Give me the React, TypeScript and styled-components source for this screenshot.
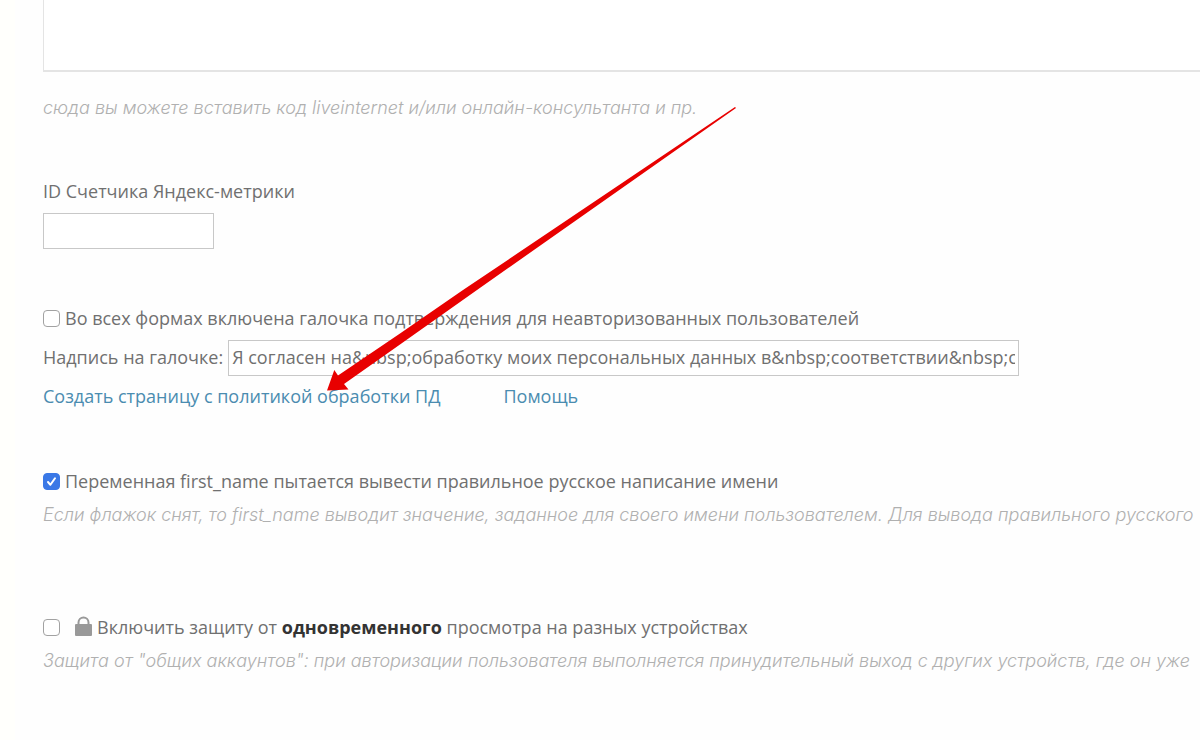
import React from "react";
import styled, { createGlobalStyle } from "styled-components";

const GlobalStyle = createGlobalStyle`
  *, *::before, *::after { box-sizing: border-box; }
  body {
    margin: 0;
    background: #fefefe;
    color: #707070;
    font-family: "Open Sans", "Noto Sans", sans-serif;
    font-size: 18px;
    line-height: 24px;
    overflow-x: hidden;
  }
`;

const Page = styled.main`
  position: relative;
  min-height: 100vh;
  padding-left: 28px;
  border-left: 15px solid #fffffc;
  overflow: hidden;
  white-space: nowrap;
`;

const Section = styled.section<{ $gap: number }>`
  display: flex;
  flex-direction: column;
  align-items: flex-start;
  margin-bottom: ${(p) => p.$gap}px;
`;

const CodeArea = styled.textarea`
  display: block;
  width: 100%;
  height: 72px;
  margin-bottom: 24px;
  border: solid #e4e4e4;
  border-width: 0 0 2px 1px;
  background: #fff;
  resize: none;
  outline: none;
`;

const Note = styled.p`
  margin: 0;
  color: #b0b0b0;
  font-family: Inter, "Open Sans", sans-serif;
  font-style: italic;
  font-weight: 300;
`;

const TextInput = styled.input<{ $width: number }>`
  width: ${(p) => p.$width}px;
  height: 36px;
  padding: 0 3px 2px;
  border: 1px solid #c8c8c8;
  border-radius: 0;
  background: #fff;
  color: inherit;
  font: inherit;
  outline: none;
`;

const FieldLabel = styled.label`
  margin-bottom: 10px;
`;

const Row = styled.div`
  display: flex;
  align-items: center;
  gap: 5px;
`;

const CheckRow = styled(Row)`
  margin-bottom: 10px;
`;

const LabelledRow = styled(Row)`
  margin-bottom: 8px;

  label {
    padding-bottom: 2px;
  }
`;

const LinkRow = styled(Row)`
  gap: 63px;
`;

const Checkbox = styled.input`
  appearance: none;
  flex: none;
  width: 17px;
  height: 17px;
  margin: 0;
  border: 1px solid #a2a2a2;
  border-radius: 4px;
  background: #fff;

  &:checked {
    border-color: #3a78e6;
    background: #3a78e6
      url("data:image/svg+xml,%3Csvg xmlns='http://www.w3.org/2000/svg' viewBox='0 0 15 15'%3E%3Cpath d='M4 8l2.4 2.8L11 4.2' fill='none' stroke='white' stroke-width='2' stroke-linecap='round' stroke-linejoin='round'/%3E%3C/svg%3E")
      center / 15px 15px no-repeat;
  }
`;

const CheckLabel = styled.label`
  b {
    color: #333;
    font-weight: 700;
  }
`;

const LockIcon = styled.svg`
  flex: none;
  width: 17px;
  height: 22px;
  margin-left: 10px;
`;

const Link = styled.a`
  color: #4a8cb0;
  text-decoration: none;
`;

const Arrow = styled.svg`
  position: absolute;
  top: 100px;
  left: 305px;
  width: 420px;
  height: 300px;
  pointer-events: none;
`;

export default function App() {
  return (
    <>
      <GlobalStyle />
      <Page>
        <Section $gap={59}>
          <CodeArea aria-label="Код счетчиков" />
          <Note>сюда вы можете вставить код liveinternet и/или онлайн-консультанта и пр.</Note>
        </Section>

        <Section $gap={57}>
          <FieldLabel htmlFor="metrika">ID Счетчика Яндекс-метрики</FieldLabel>
          <TextInput id="metrika" type="text" $width={171} />
        </Section>

        <Section $gap={61}>
          <CheckRow>
            <Checkbox id="confirm" type="checkbox" />
            <CheckLabel htmlFor="confirm">
              Во всех формах включена галочка подтверждения для неавторизованных пользователей
            </CheckLabel>
          </CheckRow>
          <LabelledRow>
            <label htmlFor="caption">Надпись на галочке:</label>
            <TextInput
              id="caption"
              type="text"
              $width={791}
              defaultValue="Я согласен на&amp;nbsp;обработку моих персональных данных в&amp;nbsp;соответствии&amp;nbsp;с&amp;nbsp;"
            />
          </LabelledRow>
          <LinkRow>
            <Link href="#policy">Создать страницу с политикой обработки ПД</Link>
            <Link href="#help">Помощь</Link>
          </LinkRow>
        </Section>

        <Section $gap={88}>
          <CheckRow>
            <Checkbox id="first-name" type="checkbox" defaultChecked />
            <CheckLabel htmlFor="first-name">
              Переменная first_name пытается вывести правильное русское написание имени
            </CheckLabel>
          </CheckRow>
          <Note>
            Если флажок снят, то first_name выводит значение, заданное для своего имени пользователем. Для вывода правильного русского
          </Note>
        </Section>

        <Section $gap={0}>
          <CheckRow>
            <Checkbox id="protect" type="checkbox" />
            <LockIcon viewBox="0 0 17 22" aria-hidden="true">
              <path d="M3.500 10V6.500a5 5 0 0 1 10 0V10" fill="none" stroke="#999" strokeWidth="2" />
              <rect x="0" y="8" width="17" height="12" rx="1" fill="#999" />
            </LockIcon>
            <CheckLabel htmlFor="protect">
              Включить защиту от <b>одновременного</b> просмотра на разных устройствах
            </CheckLabel>
          </CheckRow>
          <Note>
            Защита от "общих аккаунтов": при авторизации пользователя выполняется принудительный выход с других устройств, где он уже
          </Note>
        </Section>

        <Arrow viewBox="320 100 420 300" aria-hidden="true">
          <path
            d="M327 390.500L334.300 370L338 375.500L400 333.500L463 290L735 107L736 108L477 290L400 344.500L344 384L348.500 389.500Z"
            fill="#e80000"
          />
        </Arrow>
      </Page>
    </>
  );
}
